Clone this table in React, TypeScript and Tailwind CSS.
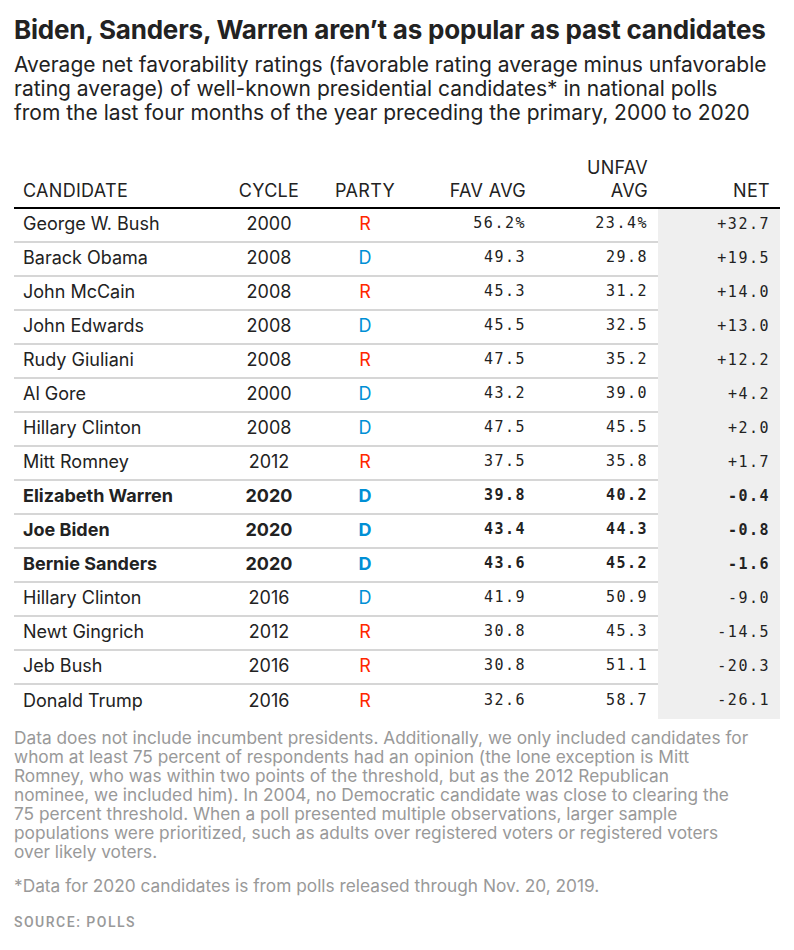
type Row = {
  name: string;
  cycle: string;
  party: "R" | "D";
  fav: string;
  unfav: string;
  net: string;
  bold?: boolean;
};

const rows: Row[] = [
  { name: "George W. Bush", cycle: "2000", party: "R", fav: "56.2%", unfav: "23.4%", net: "+32.7" },
  { name: "Barack Obama", cycle: "2008", party: "D", fav: "49.3", unfav: "29.8", net: "+19.5" },
  { name: "John McCain", cycle: "2008", party: "R", fav: "45.3", unfav: "31.2", net: "+14.0" },
  { name: "John Edwards", cycle: "2008", party: "D", fav: "45.5", unfav: "32.5", net: "+13.0" },
  { name: "Rudy Giuliani", cycle: "2008", party: "R", fav: "47.5", unfav: "35.2", net: "+12.2" },
  { name: "Al Gore", cycle: "2000", party: "D", fav: "43.2", unfav: "39.0", net: "+4.2" },
  { name: "Hillary Clinton", cycle: "2008", party: "D", fav: "47.5", unfav: "45.5", net: "+2.0" },
  { name: "Mitt Romney", cycle: "2012", party: "R", fav: "37.5", unfav: "35.8", net: "+1.7" },
  { name: "Elizabeth Warren", cycle: "2020", party: "D", fav: "39.8", unfav: "40.2", net: "-0.4", bold: true },
  { name: "Joe Biden", cycle: "2020", party: "D", fav: "43.4", unfav: "44.3", net: "-0.8", bold: true },
  { name: "Bernie Sanders", cycle: "2020", party: "D", fav: "43.6", unfav: "45.2", net: "-1.6", bold: true },
  { name: "Hillary Clinton", cycle: "2016", party: "D", fav: "41.9", unfav: "50.9", net: "-9.0" },
  { name: "Newt Gingrich", cycle: "2012", party: "R", fav: "30.8", unfav: "45.3", net: "-14.5" },
  { name: "Jeb Bush", cycle: "2016", party: "R", fav: "30.8", unfav: "51.1", net: "-20.3" },
  { name: "Donald Trump", cycle: "2016", party: "R", fav: "32.6", unfav: "58.7", net: "-26.1" },
];

const notes = [
  "Data does not include incumbent presidents. Additionally, we only included candidates for",
  "whom at least 75 percent of respondents had an opinion (the lone exception is Mitt",
  "Romney, who was within two points of the threshold, but as the 2012 Republican",
  "nominee, we included him). In 2004, no Democratic candidate was close to clearing the",
  "75 percent threshold. When a poll presented multiple observations, larger sample",
  "populations were prioritized, such as adults over registered voters or registered voters",
  "over likely voters.",
];

const cols = "grid grid-cols-[206px_98px_94px_124px_122px_122px]";
const mono = "font-['DejaVu_Sans_Mono',monospace] text-[15px] tracking-[1.5px]";

export default function App() {
  return (
    <div className="w-[794px] min-h-[950px] bg-white px-[14px] pt-[14px] font-['Inter','Liberation_Sans',sans-serif] text-[#222]">
      <h1 className="whitespace-nowrap text-[26px] font-bold leading-[32px] tracking-[-0.2px]">
        Biden, Sanders, Warren aren’t as popular as past candidates
      </h1>
      <p className="mt-[7px] whitespace-nowrap text-[21px] leading-[24px]">
        Average net favorability ratings (favorable rating average minus unfavorable
        <br />
        rating average) of well-known presidential candidates* in national polls
        <br />
        from the last four months of the year preceding the primary, 2000 to 2020
      </p>

      {/* Table */}
      <div className="mt-[31px] w-[766px]">
        <div className={`${cols} items-end border-b-2 border-black pb-[5px] text-[18px] leading-[23px] tracking-[0.3px]`}>
          <div className="pl-[9px]">CANDIDATE</div>
          <div className="text-center">CYCLE</div>
          <div className="text-center">PARTY</div>
          <div className="pr-[10px] text-right">FAV AVG</div>
          <div className="pr-[10px] text-right">
            UNFAV
            <br />
            AVG
          </div>
          <div className="pr-[10px] text-right">NET</div>
        </div>
        {rows.map((r, i) => (
          <div
            key={i}
            className={`${cols} h-[34px] text-[18px] ${
              i < rows.length - 1 ? "border-b-2 border-[#d6d6d6]" : ""
            } ${r.bold ? "font-bold" : ""}`}
          >
            <div className="flex items-center pb-[3px] pl-[9px]">{r.name}</div>
            <div className="flex items-center justify-center pb-[3px]">{r.cycle}</div>
            <div
              className={`flex items-center justify-center pb-[3px] ${
                r.party === "R" ? "text-[#ff2700]" : "text-[#008fd5]"
              }`}
            >
              {r.party}
            </div>
            <div className={`flex items-center justify-end pb-[3px] pr-[10px] ${mono}`}>{r.fav}</div>
            <div className={`flex items-center justify-end pb-[3px] pr-[10px] ${mono}`}>{r.unfav}</div>
            <div
              className={`-mb-[2px] flex h-[34px] items-center justify-end bg-[#efefef] pb-[3px] pr-[10px] ${mono}`}
            >
              {r.net}
            </div>
          </div>
        ))}
      </div>

      {/* Notes */}
      <div className="mt-[9px] text-[17.3px] leading-[19px] text-[#999]">
        <p>
          {notes.map((line, i) => (
            <span key={i} className="block whitespace-nowrap">
              {line}
            </span>
          ))}
        </p>
        <p className="mt-[15px]">*Data for 2020 candidates is from polls released through Nov. 20, 2019.</p>
        <p className="mt-[18px] font-['Roboto',sans-serif] text-[14px] font-medium tracking-[1.5px]">
          SOURCE: POLLS
        </p>
      </div>
    </div>
  );
}
